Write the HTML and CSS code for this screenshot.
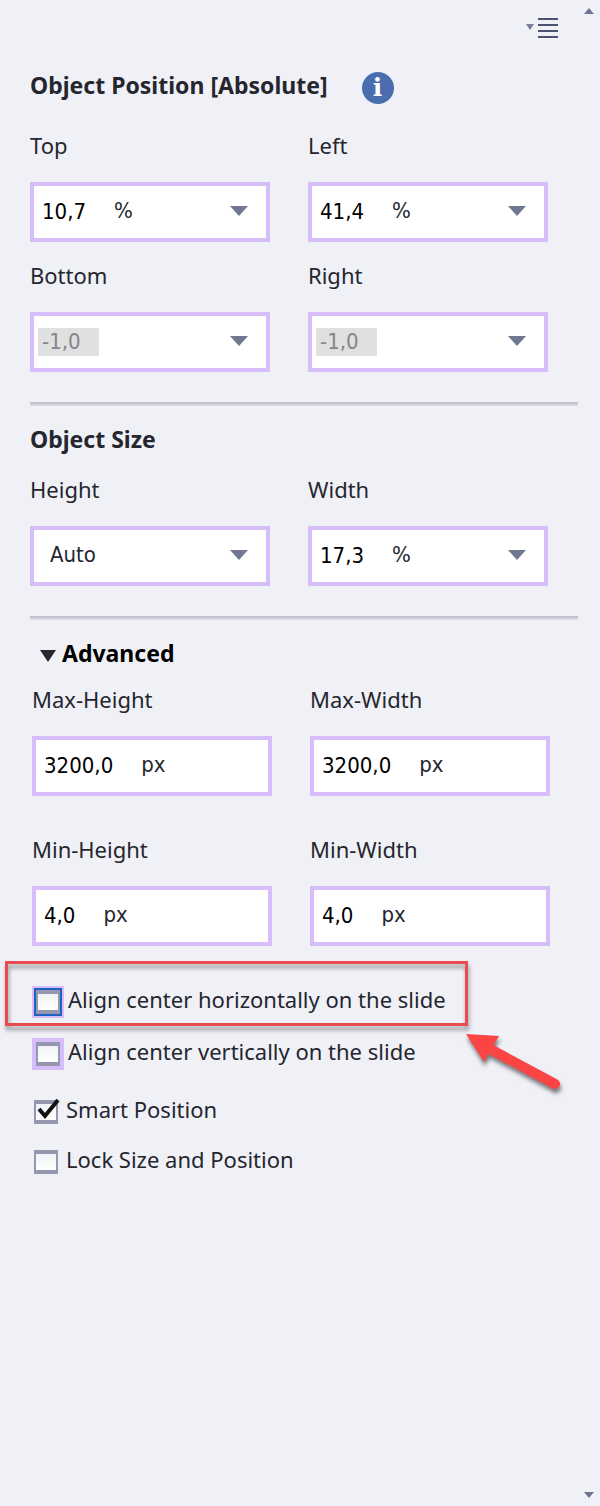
FILE: index.html
```html
<!DOCTYPE html>
<html lang="en">
<head>
    <meta charset="UTF-8">
    <meta name="viewport" content="width=device-width, initial-scale=1.0">
    <title>Object Position</title>
    <link rel="stylesheet" href="styles.css">
</head>
<body>
    <main class="panel">
        <div class="toolbar">
            <button class="menu-btn" type="button" aria-label="Panel menu">
                <svg width="32" height="20" viewBox="0 0 32 20">
                    <path d="M0 6h8l-4 6z" fill="#7b8099"/>
                    <path d="M12 1h20M12 7h20M12 13h20M12 19h20" stroke="#4a5270" stroke-width="2"/>
                </svg>
            </button>
        </div>

        <section>
            <div class="title-row">
                <h2>Object Position [Absolute]</h2>
                <button class="info-btn" type="button">i</button>
            </div>
            <div class="grid">
                <div class="field">
                    <label for="top">Top</label>
                    <div class="box">
                        <input type="text" class="value" id="top" value="10,7" size="4">
                        <div class="unit">
                            <select aria-label="Top unit"><option>%</option></select>
                            <svg class="arrow" width="18" height="10"><path d="M0 0h18L9 10z"/></svg>
                        </div>
                    </div>
                </div>
                <div class="field">
                    <label for="left">Left</label>
                    <div class="box">
                        <input type="text" class="value" id="left" value="41,4" size="4">
                        <div class="unit">
                            <select aria-label="Left unit"><option>%</option></select>
                            <svg class="arrow" width="18" height="10"><path d="M0 0h18L9 10z"/></svg>
                        </div>
                    </div>
                </div>
                <div class="field">
                    <label for="bottom">Bottom</label>
                    <div class="box">
                        <input type="text" class="value" id="bottom" value="-1,0" size="4" disabled>
                        <div class="unit">
                            <select aria-label="Bottom unit"><option></option></select>
                            <svg class="arrow" width="18" height="10"><path d="M0 0h18L9 10z"/></svg>
                        </div>
                    </div>
                </div>
                <div class="field">
                    <label for="right">Right</label>
                    <div class="box">
                        <input type="text" class="value" id="right" value="-1,0" size="4" disabled>
                        <div class="unit">
                            <select aria-label="Right unit"><option></option></select>
                            <svg class="arrow" width="18" height="10"><path d="M0 0h18L9 10z"/></svg>
                        </div>
                    </div>
                </div>
            </div>
        </section>

        <hr>

        <section>
            <h2>Object Size</h2>
            <div class="grid">
                <div class="field">
                    <label for="height">Height</label>
                    <div class="box">
                        <div class="unit unit-only">
                            <select id="height"><option>Auto</option></select>
                            <svg class="arrow" width="18" height="10"><path d="M0 0h18L9 10z"/></svg>
                        </div>
                    </div>
                </div>
                <div class="field">
                    <label for="width">Width</label>
                    <div class="box">
                        <input type="text" class="value" id="width" value="17,3" size="4">
                        <div class="unit">
                            <select aria-label="Width unit"><option>%</option></select>
                            <svg class="arrow" width="18" height="10"><path d="M0 0h18L9 10z"/></svg>
                        </div>
                    </div>
                </div>
            </div>
        </section>

        <hr>

        <details class="advanced" open>
            <summary>
                <svg width="16" height="18"><path d="M0 6h16L8 18z" fill="#25262e"/></svg>
                Advanced
            </summary>
            <div class="grid">
                <div class="field">
                    <label for="maxHeight">Max-Height</label>
                    <div class="box">
                        <input type="text" class="value" id="maxHeight" value="3200,0" size="6">
                        <span class="unit">px</span>
                    </div>
                </div>
                <div class="field">
                    <label for="maxWidth">Max-Width</label>
                    <div class="box">
                        <input type="text" class="value" id="maxWidth" value="3200,0" size="6">
                        <span class="unit">px</span>
                    </div>
                </div>
                <div class="field">
                    <label for="minHeight">Min-Height</label>
                    <div class="box">
                        <input type="text" class="value" id="minHeight" value="4,0" size="3">
                        <span class="unit">px</span>
                    </div>
                </div>
                <div class="field">
                    <label for="minWidth">Min-Width</label>
                    <div class="box">
                        <input type="text" class="value" id="minWidth" value="4,0" size="3">
                        <span class="unit">px</span>
                    </div>
                </div>
            </div>

            <div class="checks">
                <div class="check marked">
                    <input type="checkbox" class="ring focused" id="alignH">
                    <label for="alignH">Align center horizontally on the slide</label>
                    <span class="callout"></span>
                    <svg class="pointer" width="104" height="70" viewBox="0 0 104 70">
                        <path d="M89 50L24 15" stroke="#fb4545" stroke-width="10" stroke-linecap="round"/>
                        <path d="M0 0L33 2L18 28z" fill="#fb4545"/>
                    </svg>
                </div>
                <div class="check">
                    <input type="checkbox" class="ring" id="alignV">
                    <label for="alignV">Align center vertically on the slide</label>
                </div>
            </div>
            <div class="checks plain">
                <div class="check">
                    <span class="tick-box">
                        <input type="checkbox" id="smart" checked>
                        <svg class="tick" width="24" height="20" viewBox="0 0 24 20"><path d="M3 8l6 7L22 -1" fill="none" stroke="#111" stroke-width="4"/></svg>
                    </span>
                    <label for="smart">Smart Position</label>
                </div>
                <div class="check">
                    <input type="checkbox" id="lock">
                    <label for="lock">Lock Size and Position</label>
                </div>
            </div>
        </details>
    </main>

    <div class="scrollbar">
        <svg width="10" height="6"><path d="M0 6h10L5 0z"/></svg>
        <svg width="10" height="6"><path d="M0 0h10L5 6z"/></svg>
    </div>
</body>
</html>
```
FILE: styles.css
```css
* {
    box-sizing: border-box;
}
body {
    display: flex;
    min-height: 100vh;
    margin: 0;
    background-color: #f0f1f7;
    color: #25262e;
    font-family: "Noto Sans", sans-serif;
    font-size: 22px;
    line-height: 26px;
}
button, input, select {
    margin: 0;
    padding: 0;
    border: none;
    background: none;
    color: inherit;
    font: inherit;
}
svg {
    display: block;
}
.panel {
    flex: 1;
    padding: 18px 0 0 30px;
}
.toolbar {
    display: flex;
    justify-content: flex-end;
    padding-right: 20px;
    margin-bottom: 34px;
}
.title-row {
    display: flex;
    gap: 34px;
    margin-bottom: 28px;
}
h2, summary {
    margin: 0;
    font-size: 23px;
    font-weight: bold;
}
section > h2 {
    margin-bottom: 24px;
}
.info-btn {
    width: 32px;
    height: 32px;
    border-radius: 50%;
    background-color: #4a6db0;
    color: white;
    font-family: "DejaVu Serif", serif;
    font-size: 25px;
    font-weight: bold;
    line-height: 32px;
}
.grid {
    display: grid;
    grid-template-columns: 1fr 1fr;
    gap: 20px 38px;
    margin-right: 30px;
}
.field label {
    display: block;
    margin-bottom: 24px;
}
.box {
    display: flex;
    align-items: center;
    gap: 10px;
    height: 60px;
    padding: 0 4px;
    border: 4px solid #d7befb;
    background-color: white;
    font-family: "DejaVu Sans Condensed", sans-serif;
    line-height: 28px;
}
.value {
    field-sizing: content;
    height: 28px;
    padding: 0 18px 0 4px;
    color: black;
}
.value:disabled {
    background-color: #e0e0e0;
    color: #85858c;
}
.unit {
    position: relative;
    flex: 1;
    padding-bottom: 2px;
}
.unit select {
    display: block;
    width: 100%;
    height: 28px;
    appearance: none;
}
.unit-only {
    padding-left: 12px;
}
.arrow {
    position: absolute;
    top: 9px;
    right: 14px;
    fill: #70788f;
    pointer-events: none;
}
hr {
    height: 4px;
    margin: 30px 0 20px;
    border: none;
    border-top: 2px solid #c1c2d0;
    background-color: #d6d6dc;
}
.advanced {
    padding-left: 2px;
}
.advanced .grid {
    gap: 40px 38px;
    margin-right: 28px;
}
summary {
    display: flex;
    align-items: center;
    gap: 6px;
    margin-bottom: 20px;
    padding-left: 8px;
    color: black;
}
.checks {
    display: flex;
    flex-direction: column;
    align-items: flex-start;
    gap: 20px;
    margin-top: 40px;
}
.checks.plain {
    gap: 18px;
    margin-top: 26px;
    padding-left: 2px;
}
.check {
    display: flex;
    gap: 8px;
    height: 32px;
}
.check input {
    width: 24px;
    height: 24px;
    margin-top: 4px;
    border: solid #9497ad;
    border-width: 4px 2px;
    background: linear-gradient(#f1f3f8, white);
    appearance: none;
}
.check input.ring {
    margin-left: 4px;
    box-shadow: 0 0 0 4px #d7befb;
}
.check input.focused {
    box-shadow: 0 0 0 2px #1d5fc4, 0 0 0 4px #d7befb;
}
.tick-box {
    position: relative;
}
.tick {
    position: absolute;
    top: 5px;
    left: 2px;
    overflow: visible;
    pointer-events: none;
}
.marked {
    position: relative;
}
.callout {
    position: absolute;
    inset: -25px -22px -8px -27px;
    border: 3px solid #e94b4f;
    filter: drop-shadow(1px 4px 2px rgba(0, 0, 0, 0.4));
    pointer-events: none;
}
.pointer {
    position: absolute;
    top: 48px;
    left: calc(100% + 20px);
    overflow: visible;
    filter: drop-shadow(1px 4px 2px rgba(0, 0, 0, 0.5));
    pointer-events: none;
}
.scrollbar {
    display: flex;
    flex-direction: column;
    justify-content: space-between;
    align-items: center;
    width: 22px;
    padding: 8px 0;
    fill: #70758f;
}
```
